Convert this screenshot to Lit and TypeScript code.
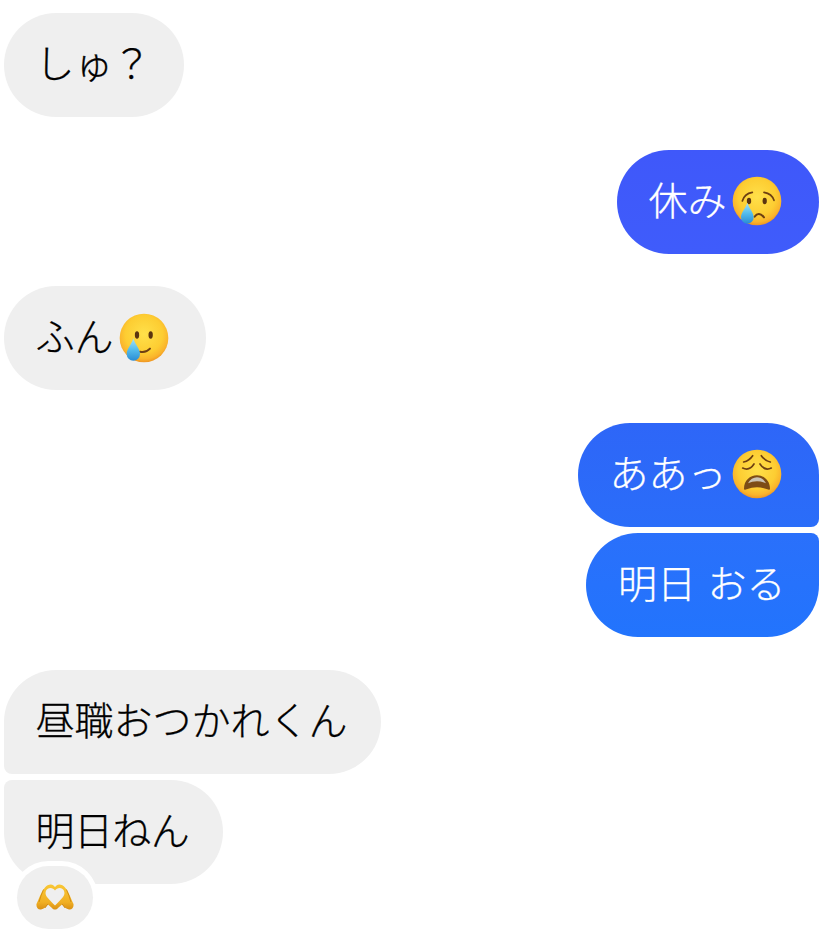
import { LitElement, html, css, svg } from "lit";
import { customElement } from "lit/decorators.js";

const face = (id: string, cx: number, cy: number, r: number, inner: unknown) => html`<svg class="emoji" viewBox="${cx - 75} ${cy - 75} 150 150">
  <defs>
    <radialGradient id="${id}" cx="50%" cy="42%" r="58%">
      <stop offset="0%" stop-color="#ffe04a" />
      <stop offset="66%" stop-color="#fdcd32" />
      <stop offset="88%" stop-color="#fab42c" />
      <stop offset="100%" stop-color="#ef9622" />
    </radialGradient>
    <linearGradient id="${id}t" x1="0" y1="0" x2="0" y2="1">
      <stop offset="0%" stop-color="#a6e2f8" />
      <stop offset="50%" stop-color="#55bdec" />
      <stop offset="100%" stop-color="#2a8cd4" />
    </linearGradient>
  </defs>
  <circle cx="${cx}" cy="${cy}" r="${r}" fill="url(#${id})" />
  ${inner}
</svg>`;

const crying = face("c", 92, 88, 73, svg`
  <path d="M48 88Q54 66 78 62" fill="none" stroke="#6e3f12" stroke-width="5" stroke-linecap="round"/>
  <path d="M113 62Q137 66 143 86" fill="none" stroke="#6e3f12" stroke-width="5" stroke-linecap="round"/>
  <ellipse cx="68" cy="88" rx="6.500" ry="9.500" fill="#5b3410"/>
  <ellipse cx="115" cy="88" rx="6.500" ry="9.500" fill="#5b3410"/>
  <path d="M85 135Q97 118 113 137" fill="none" stroke="#6e3f12" stroke-width="6" stroke-linecap="round"/>
  <path d="M63 93C58 110 44 122 44 137A19 19 0 0 0 82 137C82 122 68 110 63 93Z" fill="url(#ct)"/>
`);

const smiling = face("s", 92, 85, 73, svg`
  <ellipse cx="71" cy="76" rx="6.500" ry="11" fill="#5b3410"/>
  <ellipse cx="112" cy="76" rx="6.500" ry="11" fill="#5b3410"/>
  <path d="M80 126Q98 130 110 117" fill="none" stroke="#6e3f12" stroke-width="6" stroke-linecap="round"/>
  <path d="M60 86C55 104 40 118 40 133A20 20 0 0 0 80 133C80 118 65 104 60 86Z" fill="url(#st)"/>
`);

const weary = face("w", 93, 84, 73, svg`
  <path d="M53 48Q70 44 80 29" fill="none" stroke="#6e3f12" stroke-width="5" stroke-linecap="round"/>
  <path d="M133 48Q116 44 106 29" fill="none" stroke="#6e3f12" stroke-width="5" stroke-linecap="round"/>
  <path d="M50 66Q70 76 84 54" fill="none" stroke="#6e3f12" stroke-width="5" stroke-linecap="round"/>
  <path d="M136 66Q116 76 102 54" fill="none" stroke="#6e3f12" stroke-width="5" stroke-linecap="round"/>
  <path d="M54 128C54 104 72 88 93 88C114 88 132 104 132 128C132 132 128 132 124 130C104 122 82 122 62 130C58 132 54 132 54 128Z" fill="#7d4c16"/>
  <path d="M66 112C72 100 82 94 93 94C104 94 114 100 120 112C104 104 82 104 66 112Z" fill="#c9c2b4"/>
`);

const hearts = html`<svg class="hands" viewBox="0 0 38 26">
  <defs>
    <linearGradient id="h" x1="0" y1="0" x2="0" y2="1">
      <stop offset="0%" stop-color="#f8c735" />
      <stop offset="70%" stop-color="#f1b024" />
      <stop offset="100%" stop-color="#d99014" />
    </linearGradient>
  </defs>
  <path fill-rule="evenodd" fill="url(#h)" d="M0.500 20C3 15 5 8 9 3.500C11 1 15 -0.500 17.500 1.500L19 3L20.500 1.500C23 -0.500 27 1 29 3.500C33 8 35 15 37.500 20C38 23 36 26 33 25.500C30 25 28 23 26 20.500L22 24C20.500 26 17.500 26 16 24L12 20.500C10 23 8 25 5 25.500C2 26 0 23 0.500 20ZM19 6.500C17.500 4 13.800 3.300 11.500 5C9 7 9 10.500 11 13C13 15.500 16.500 19 19 21.500C21.500 19 25 15.500 27 13C29 10.500 29 7 26.500 5C24.200 3.300 20.500 4 19 6.500Z" />
  <path d="M7.500 5.500Q5 11 3 18M30.500 5.500Q33 11 35 18M12 20Q10.500 21.500 9 24M26 20Q27.500 21.500 29 24" fill="none" stroke="#c98410" stroke-width=".8" />
</svg>`;

@customElement("app-root")
export class AppRoot extends LitElement {
  static styles = css`
    :host {
      display: block;
      width: 840px;
      min-height: 946px;
      background: #fff;
      font-family: "Noto Sans CJK JP", "Noto Sans", sans-serif;
    }
    .thread {
      display: flex;
      flex-direction: column;
      padding: 13px 21px 0 4px;
    }
    .bubble {
      position: relative;
      display: inline-flex;
      align-items: center;
      box-sizing: border-box;
      height: 104.2px;
      padding: 0 33.5px 7px 31.5px;
      border-radius: 52px;
      font-size: 39px;
      font-weight: 300;
      -webkit-text-stroke: 0.3px currentColor;
      line-height: 1;
      white-space: pre;
      margin-bottom: 32.4px;
    }
    .in {
      align-self: flex-start;
      background: #efefef;
      color: #000;
    }
    .out {
      align-self: flex-end;
      color: #fff;
    }
    .blue1 { background: linear-gradient(#3f58fa, #3f5cfb); }
    .blue2 { background: linear-gradient(#2e66f8, #2a6df9); }
    .blue3 { background: linear-gradient(#2a70fb, #2274fd); }
    .joined { margin-bottom: 6px; }
    .br { border-bottom-right-radius: 8px; }
    .tr { border-top-right-radius: 8px; }
    .bl { border-bottom-left-radius: 8px; }
    .tl { border-top-left-radius: 8px; }
    .tight { letter-spacing: -0.6px; }
    .spaced { word-spacing: 3px; }
    .emoji {
      width: 50px;
      height: 50px;
      margin: 6px 4px 0 5px;
      flex: none;
    }
    .reaction {
      position: absolute;
      left: 13px;
      top: 86px;
      width: 76px;
      height: 63px;
      box-sizing: border-box;
      display: flex;
      align-items: center;
      justify-content: center;
      background: #efefef;
      border-radius: 32px;
      box-shadow: 0 0 0 5px #fff;
    }
    .hands {
      width: 38px;
      height: 26px;
    }
  `;

  render() {
    return html`<div class="thread">
      <div class="bubble in tight">しゅ？</div>
      <div class="bubble out blue1"><span>休み</span>${crying}</div>
      <div class="bubble in"><span>ふん</span>${smiling}</div>
      <div class="bubble out blue2 br joined"><span>ああっ</span>${weary}</div>
      <div class="bubble out blue3 tr spaced">明日 おる</div>
      <div class="bubble in bl joined">昼職おつかれくん</div>
      <div class="bubble in tl tight">明日ねん<div class="reaction">${hearts}</div></div>
    </div>`;
  }
}
